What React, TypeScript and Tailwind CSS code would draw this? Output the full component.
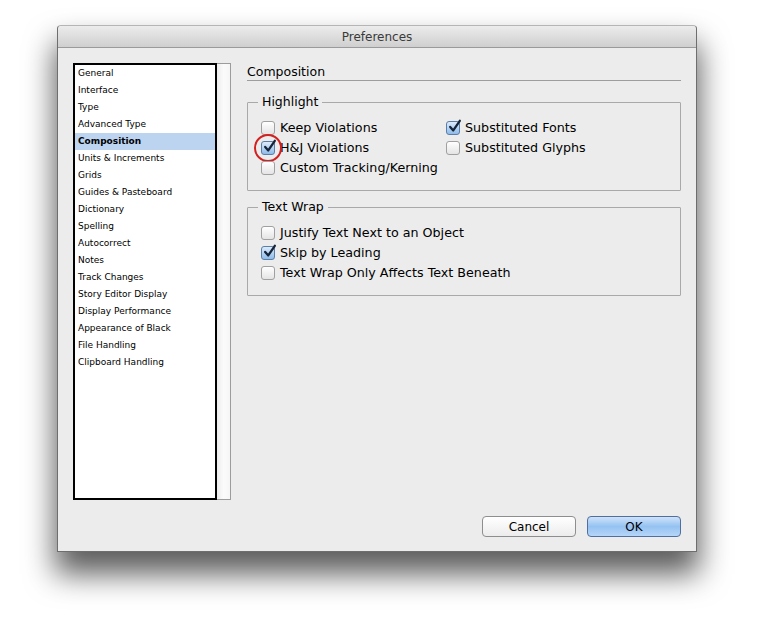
import React from "react";

const sections = [
  "General",
  "Interface",
  "Type",
  "Advanced Type",
  "Composition",
  "Units & Increments",
  "Grids",
  "Guides & Pasteboard",
  "Dictionary",
  "Spelling",
  "Autocorrect",
  "Notes",
  "Track Changes",
  "Story Editor Display",
  "Display Performance",
  "Appearance of Black",
  "File Handling",
  "Clipboard Handling",
];

const ui = { fontFamily: '"DejaVu Sans", "Liberation Sans", sans-serif' };

function Box({ checked }: { checked: boolean }) {
  return (
    <span
      className={
        "relative inline-block w-[14px] h-[14px] shrink-0 rounded-[3px] border " +
        (checked
          ? "border-[#5a7ea8] bg-gradient-to-b from-[#dcebfb] to-[#8fbbe9]"
          : "border-[#a0a0a0] bg-gradient-to-b from-[#ffffff] to-[#e4e4e4]")
      }
    >
      {checked && (
        <svg
          viewBox="0 0 16 16"
          className="absolute left-[1px] top-[-3px] w-[14px] h-[15px]"
        >
          <path
            d="M2.5 8.5 L6 12.5 L13.5 1.5"
            fill="none"
            stroke="#16243a"
            strokeWidth="2.6"
            strokeLinecap="round"
            strokeLinejoin="round"
          />
        </svg>
      )}
    </span>
  );
}

function Check({
  label,
  checked = false,
  marked = false,
}: {
  label: string;
  checked?: boolean;
  marked?: boolean;
}) {
  return (
    <div className="flex items-center gap-[5px] h-[20px]">
      <span className="relative flex">
        <Box checked={checked} />
        {marked && (
          <span className="absolute left-[-7px] top-[-7px] w-[28px] h-[28px] rounded-full border-2 border-[#d41f1f]" />
        )}
      </span>
      <span className="text-[12.7px] text-black leading-none whitespace-nowrap">{label}</span>
    </div>
  );
}

function Group({ title, children }: { title: string; children: React.ReactNode }) {
  return (
    <fieldset className="border border-[#a9a9a9] rounded-[1px] pl-[13px] pr-[10px] pb-[12px] pt-[2px]">
      <legend className="ml-[-3px] px-[4px] text-[12.5px] text-black leading-[16px]">{title}</legend>
      {children}
    </fieldset>
  );
}

export default function App() {
  return (
    <div className="w-[768px] h-[617px] bg-white pl-[57px] pt-[25px]" style={ui}>
      <div className="w-[640px] h-[527px] flex flex-col border border-[#6e6e6e] border-t-[#b5b5b5] rounded-t-[4px] bg-[#ececec] shadow-[0_20px_30px_2px_rgba(0,0,0,0.64)]">
        {/* title bar */}
        <div className="h-[22px] shrink-0 flex items-center justify-center rounded-t-[4px] border-b border-[#9a9a9a] bg-gradient-to-b from-[#ececec] to-[#cfcfcf]">
          <span className="text-[12px] text-[#3a3a3a]">Preferences</span>
        </div>

        <div className="flex-1 flex flex-col pt-[15px] pl-[15px] pr-[15px] pb-[14px]">
          <div className="flex gap-[16px]">
            {/* section list */}
            <div className="w-[158px] h-[437px] flex shrink-0">
              <div className="w-[144px] h-full border-2 border-black bg-white">
                {sections.map((s) => {
                  const active = s === "Composition";
                  return (
                    <div
                      key={s}
                      className={
                        "h-[17px] flex items-center pl-[3px] text-[9px] text-black whitespace-nowrap " +
                        (active ? "bg-[#bdd4f1] font-bold" : "")
                      }
                    >
                      {s}
                    </div>
                  );
                })}
              </div>
              <div className="w-[14px] h-full border border-l-0 border-[#9c9c9c] bg-gradient-to-r from-[#ececec] via-[#fbfbfb] to-[#f6f6f6]" />
            </div>

            {/* composition options */}
            <div className="flex-1 flex flex-col">
              <div className="h-[18px] border-b border-[#9d9d9d] flex items-end pb-[2px]">
                <span className="text-[12.5px] leading-none text-black">Composition</span>
              </div>

              <div className="mt-[13px] flex flex-col gap-[8px]">
                <Group title="Highlight">
                  <div className="grid grid-cols-[185px_1fr] pt-[6px]">
                    <div className="flex flex-col">
                      <Check label="Keep Violations" />
                      <Check label="H&J Violations" checked marked />
                      <Check label="Custom Tracking/Kerning" />
                    </div>
                    <div className="flex flex-col">
                      <Check label="Substituted Fonts" checked />
                      <Check label="Substituted Glyphs" />
                    </div>
                  </div>
                </Group>

                <Group title="Text Wrap">
                  <div className="flex flex-col pt-[6px]">
                    <Check label="Justify Text Next to an Object" />
                    <Check label="Skip by Leading" checked />
                    <Check label="Text Wrap Only Affects Text Beneath" />
                  </div>
                </Group>
              </div>
            </div>
          </div>

          {/* dialog buttons */}
          <div className="mt-auto flex justify-end gap-[11px]">
            <button className="w-[94px] h-[21px] rounded-[4px] border border-[#8e8e8e] bg-gradient-to-b from-[#ffffff] to-[#ececec] text-[12px] text-black leading-none">
              Cancel
            </button>
            <button className="w-[94px] h-[21px] rounded-[4px] border border-[#4f6f9e] bg-gradient-to-b from-[#cfe3fa] via-[#95c2f1] to-[#b5d6f8] text-[12px] text-black leading-none">
              OK
            </button>
          </div>
        </div>
      </div>
    </div>
  );
}
